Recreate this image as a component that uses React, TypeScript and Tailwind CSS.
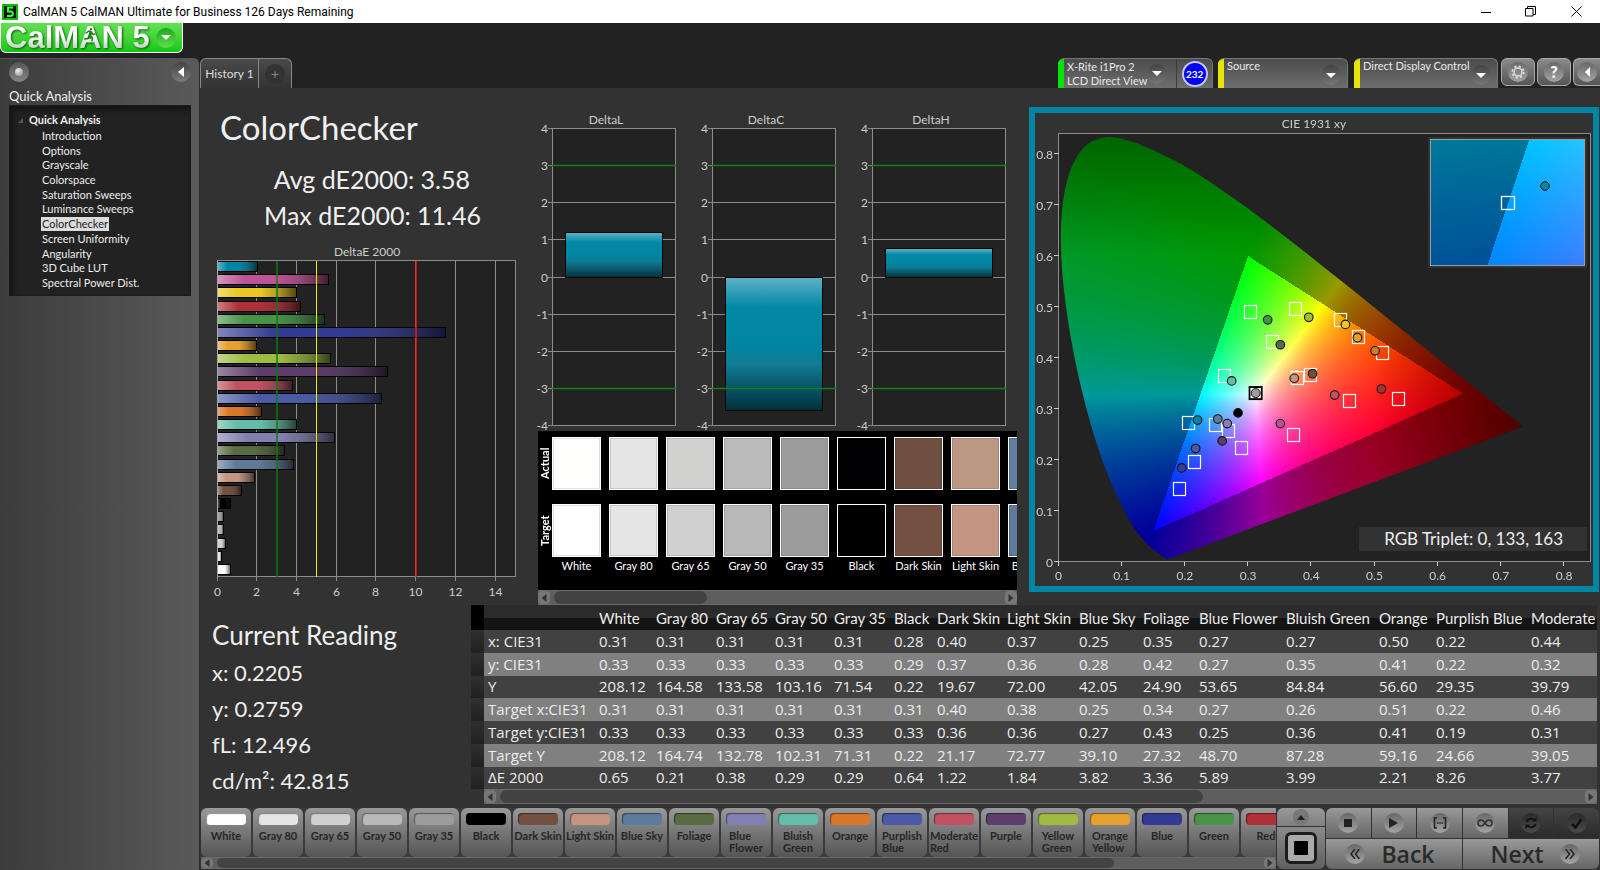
import React, { useEffect, useRef } from "react";

type Patch = { name: string; color: string; actual?: string; dE: number };

const patches: Patch[] = [
  { name: "White", color: "#ffffff", actual: "#fffffd", dE: 0.65 },
  { name: "Gray 80", color: "#e5e5e5", dE: 0.21 },
  { name: "Gray 65", color: "#d0d0d0", actual: "#d2d2d0", dE: 0.38 },
  { name: "Gray 50", color: "#b9b9b9", actual: "#bababa", dE: 0.29 },
  { name: "Gray 35", color: "#9c9c9c", dE: 0.29 },
  { name: "Black", color: "#000000", actual: "#020204", dE: 0.64 },
  { name: "Dark Skin", color: "#735041", actual: "#6f4f40", dE: 1.22 },
  { name: "Light Skin", color: "#c39582", actual: "#bc9784", dE: 1.84 },
  { name: "Blue Sky", color: "#5e7a9c", actual: "#5f7fa0", dE: 3.82 },
  { name: "Foliage", color: "#596b42", dE: 3.36 },
  { name: "Blue Flower", color: "#8280b0", dE: 5.89 },
  { name: "Bluish Green", color: "#64bda9", dE: 3.99 },
  { name: "Orange", color: "#d87828", dE: 2.21 },
  { name: "Purplish Blue", color: "#4a5aa5", dE: 8.26 },
  { name: "Moderate Red", color: "#c25261", dE: 3.77 },
  { name: "Purple", color: "#5d3d6b", dE: 8.58 },
  { name: "Yellow Green", color: "#9fbc40", dE: 5.7 },
  { name: "Orange Yellow", color: "#e6a02e", dE: 1.98 },
  { name: "Blue", color: "#333c94", dE: 11.46 },
  { name: "Green", color: "#479447", dE: 5.4 },
  { name: "Red", color: "#b03039", dE: 4.2 },
  { name: "Yellow", color: "#ecc821", dE: 4.0 },
  { name: "Magenta", color: "#bb5394", dE: 5.6 },
  { name: "Cyan", color: "#0085a3", dE: 2.03 },
];

/* ---------- shared pieces ---------- */

function ScrollBar({ thumb, small = false }: { thumb: string; small?: boolean }) {
  const arrow = "flex w-3 shrink-0 items-center justify-center rounded-sm bg-[#777] text-[#333]";
  return (
    <div className={`flex gap-1 border-y border-[#6a6a6a] bg-[#5e5e5e] ${small ? "h-3" : "h-[15px]"}`}>
      <button aria-label="Scroll left" className={arrow}>
        <svg width="6" height="8" viewBox="0 0 6 8"><path d="M5.5 0v8L.5 4z" fill="currentColor" /></svg>
      </button>
      <div className="flex-1"><div className={`h-full rounded-full bg-[#434343] ${thumb}`} /></div>
      <button aria-label="Scroll right" className={arrow}>
        <svg width="6" height="8" viewBox="0 0 6 8"><path d="M.5 0v8l5-4z" fill="currentColor" /></svg>
      </button>
    </div>
  );
}

function Knob({ children, dark = false }: { children: React.ReactNode; dark?: boolean }) {
  return (
    <span className={`flex size-5 items-center justify-center rounded-full bg-linear-to-b ${dark ? "from-[#2b2b2b] to-[#4a4a4a]" : "from-[#686868] to-[#a5a5a5]"}`}>
      {children}
    </span>
  );
}

function Caret() {
  return (
    <span className="flex size-5 items-center justify-center rounded-full bg-linear-to-b from-[#444] to-[#777]">
      <svg width="10" height="5" viewBox="0 0 10 5"><path d="M0 0h10L5 5z" fill="#fff" /></svg>
    </span>
  );
}

/* ---------- window chrome ---------- */

function TitleBar() {
  return (
    <div className="flex h-[23px] items-center bg-white text-black">
      <svg className="ml-0.5" width="16" height="16" viewBox="0 0 16 16">
        <rect width="16" height="16" fill="#031c03" />
        <rect x="1" y="1" width="14" height="14" fill="none" stroke="#12b812" strokeWidth="2" />
        <path d="M11 3.500H6v4h2.500c3 0 3 4.500 0 4.500H5" fill="none" stroke="#3dfc3d" strokeWidth="2" />
      </svg>
      <h1 className="ml-[5px] flex-1 font-['Roboto',sans-serif] text-[12px]">CalMAN 5 CalMAN Ultimate for Business 126 Days Remaining</h1>
      <button aria-label="Minimize" className="flex w-11 justify-center"><svg width="10" height="10" viewBox="0 0 10 10"><path d="M0 5.500h10" stroke="#000" /></svg></button>
      <button aria-label="Restore" className="flex w-11 justify-center">
        <svg width="11" height="11" viewBox="0 0 11 11" fill="none" stroke="#000"><path d="M.5 2.500h7.500v7.500H.5zM2.500 2.500V.5h8v8H8" /></svg>
      </button>
      <button aria-label="Close" className="flex w-12 justify-center"><svg width="11" height="11" viewBox="0 0 11 11"><path d="M.5.5l10 10M10.500.5l-10 10" stroke="#000" /></svg></button>
    </div>
  );
}

function Logo() {
  return (
    <button className="relative flex h-[30px] w-[183px] items-center justify-between overflow-hidden rounded-b-md border border-t-0 border-white bg-linear-to-b from-[#62e052] to-[#06c80e] pr-1.5 pl-1">
      <span className="bg-linear-to-b from-white from-40% to-[#b8c4b8] bg-clip-text font-['Liberation_Sans',sans-serif] text-[31px] leading-[28px] font-bold text-transparent drop-shadow-[1px_1px_1px_rgba(0,60,0,0.8)]">CalMAN 5</span>
      <svg className="absolute top-1 left-[82px]" width="14" height="16" viewBox="0 0 14 16" fill="none" stroke="#1c7a1c" strokeWidth="1.400" strokeLinecap="round">
        <circle cx="8" cy="2.200" r="1.100" fill="#1c7a1c" stroke="none" />
        <path d="M3 6l3-2 2.500 1L7 9l2.500 2-.5 3M7 9l-2 2.500-3.500.5M8.500 5L10 7.500l2-.5" />
      </svg>
      <span className="flex size-5 items-center justify-center rounded-full bg-linear-to-b from-[#18a818] to-[#5ce04c]">
        <svg width="10" height="5" viewBox="0 0 10 5"><path d="M0 0h10L5 5z" fill="#fff" /></svg>
      </span>
    </button>
  );
}

const steps = ["Introduction", "Options", "Grayscale", "Colorspace", "Saturation Sweeps", "Luminance Sweeps", "ColorChecker", "Screen Uniformity", "Angularity", "3D Cube LUT", "Spectral Power Dist."];

function Sidebar() {
  return (
    <aside className="w-[200px] shrink-0 rounded-tr-md border-t border-r border-t-[#555] border-r-[#2a2a2a] bg-linear-to-r from-[#3c3c3c] to-[#5a5a5a] pr-2 pl-[9px]">
      <div className="flex items-center justify-between pt-[3px]">
        <button aria-label="Record" className="flex size-5 items-center justify-center rounded-full bg-linear-to-b from-[#555] to-[#868686]">
          <span className="size-2 rounded-full bg-radial-[at_35%_30%] from-[#eee] to-[#888]" />
        </button>
        <button aria-label="Collapse panel" className="flex size-5 items-center justify-center rounded-full bg-linear-to-b from-[#444] to-[#7c7c7c]">
          <svg width="6" height="10" viewBox="0 0 6 10"><path d="M6 0v10L0 5z" fill="#fff" /></svg>
        </button>
      </div>
      <h2 className="mt-[6px] text-[13px] leading-[17px] text-[#eee]">Quick Analysis</h2>
      <nav className="flex h-[191px] flex-col border border-[#1b1b1b] bg-[#222] pt-1.5 shadow-[inset_3px_4px_5px_#141414]">
        <div className="flex items-center gap-1.5 pl-2 text-[11px] leading-4 font-bold text-[#eee]">
          <svg width="5" height="5" viewBox="0 0 5 5"><path d="M5 0v5H0z" fill="#555" /></svg>
          Quick Analysis
        </div>
        <ul className="grid h-[162px] content-between pt-px pl-[31px] text-[11px] leading-[14px] text-[#ededed]">
          {steps.map((s) => (
            <li key={s} className="flex">
              <a href="#" className={s === "ColorChecker" ? "bg-[#dcdcdc] px-px text-[#222]" : "px-px"}>{s}</a>
            </li>
          ))}
        </ul>
      </nav>
    </aside>
  );
}

function DeviceTabs() {
  const tab = "flex h-full shrink-0 rounded-t-md border-t border-r border-[#777] bg-linear-to-b from-[#4c4c4c] to-[#6e6e6e] text-left text-[11px] leading-[14px] text-[#e8e8e8] overflow-hidden";
  const tool = "flex h-7 shrink-0 items-center justify-center border border-[#aaa] bg-linear-to-b from-[#8a8a8a] to-[#555]";
  return (
    <div className="flex h-[30px]">
      <div className={`${tab} w-[155px]`}>
        <button className="flex flex-1 items-center border-l-[6px] border-[#07e407] pl-[3px] text-left">
          <span className="flex-1 whitespace-nowrap">X-Rite i1Pro 2<br />LCD Direct View</span>
          <span className="mr-[9px]"><Caret /></span>
        </button>
        <div className="flex w-9 items-center justify-center border-l border-[#3a3a3a]">
          <span className="flex size-[26px] items-center justify-center rounded-full border-2 border-[#c6c6f4] bg-[#0000ff] text-[10px] font-bold text-white">232</span>
        </div>
      </div>
      <button className={`${tab} ml-[5px] w-[130px]`}>
        <span className="flex h-full flex-1 items-start border-l-[6px] border-[#e9e500] pl-[3px]">Source</span>
        <span className="mt-1.5 mr-1.5"><Caret /></span>
      </button>
      <button className={`${tab} ml-1.5 w-[144px]`}>
        <span className="flex h-full flex-1 items-start border-l-[6px] border-[#e9e500] pl-[3px] whitespace-nowrap">Direct Display Control</span>
        <span className="mt-1.5 mr-1.5"><Caret /></span>
      </button>
      <button aria-label="Settings" className={`${tool} ml-[3px] w-[34px] rounded-md`}>
        <Knob>
          <svg width="14" height="14" viewBox="0 0 14 14" fill="none" stroke="#ddd">
            <circle cx="7" cy="7" r="4" strokeWidth="1.500" />
            <circle cx="7" cy="7" r="5.700" strokeWidth="1.800" strokeDasharray="2.240 2.240" />
          </svg>
        </Knob>
      </button>
      <button aria-label="Help" className={`${tool} ml-0.5 w-[34px] rounded-md text-base font-black text-white`}><Knob>?</Knob></button>
      <button aria-label="Collapse" className={`${tool} ml-0.5 w-[27px] rounded-l-md border-r-0`}>
        <Knob><svg width="5" height="10" viewBox="0 0 5 10"><path d="M5 0v10L0 5z" fill="#fff" /></svg></Knob>
      </button>
    </div>
  );
}

/* ---------- charts ---------- */

const label = "fill-[#cdcdcd] font-['Lato',sans-serif] text-[12px]";

function DeltaEChart() {
  const unit = 19.87;
  const bars = [...patches].reverse();
  return (
    <svg viewBox="0 0 326 364" className="block w-full" role="img" aria-label="DeltaE 2000">
      <defs>
        <linearGradient id="sheen"><stop offset="0" stopColor="#fff" stopOpacity=".38" /><stop offset=".25" stopColor="#fff" stopOpacity="0" /><stop offset=".55" stopColor="#222" stopOpacity="0" /><stop offset=".72" stopColor="#333" stopOpacity=".25" /><stop offset="1" stopColor="#000" stopOpacity=".65" /></linearGradient>
      </defs>
      <text x="167" y="16" textAnchor="middle" className={label}>DeltaE 2000</text>
      <rect x="17.500" y="20.500" width="298" height="316" fill="#222" stroke="#8c8c8c" />
      {[0, 2, 4, 6, 8, 10, 12, 14].map((v) => {
        const x = Math.floor(17 + v * unit) + 0.5;
        return (
          <g key={v}>
            <path d={`M${x} 21V341`} stroke="#8c8c8c" />
            <text x={x} y="356" textAnchor="middle" className={label}>{v}</text>
          </g>
        );
      })}
      {bars.map((b, i) => {
        const y = 21.5 + Math.round(i * 13.17);
        const w = Math.round(b.dE * unit);
        return (
          <g key={b.name}>
            <rect x="17.500" y={y} width={w} height="10" fill={b.color} />
            <rect x="17.500" y={y} width={w} height="10" fill="url(#sheen)" stroke="#000" />
          </g>
        );
      })}
      <path d="M17.500 21V337" stroke="#aaa" />
      <path d="M77 21V337" stroke="#0d7a12" strokeWidth="1.500" />
      <path d="M116.500 21V337" stroke="#f0ea00" />
      <path d="M216 21V337" stroke="#ff1010" strokeWidth="1.500" />
    </svg>
  );
}

function DeltaChart({ title, value, width }: { title: string; value: number; width: number }) {
  const right = width - 10;
  const at = (v: number) => Math.floor(166 - v * 37.1) + 0.5;
  const top = at(Math.max(value, 0));
  const bottom = at(Math.min(value, 0));
  return (
    <svg viewBox={`0 0 ${width} 320`} className="block w-full" role="img" aria-label={title}>
      <defs>
        <linearGradient id={`fill-${title}`} x2="0" y2="1"><stop offset="0" stopColor="#5db3c8" /><stop offset=".22" stopColor="#0388a6" /><stop offset=".5" stopColor="#0085a3" /><stop offset=".65" stopColor="#107b93" /><stop offset="1" stopColor="#00303b" /></linearGradient>
      </defs>
      <text x={width / 2} y="13" textAnchor="middle" className={label}>{title}</text>
      <rect x="26.500" y="17.500" width={right - 27} height="297" fill="#222" stroke="#8c8c8c" />
      {[4, 3, 2, 1, 0, -1, -2, -3, -4].map((v) => (
        <g key={v}>
          <path d={`M22 ${at(v)}H${right}`} stroke="#8c8c8c" />
          <text x="22" y={at(v) + 4} textAnchor="end" className={label}>{v}</text>
        </g>
      ))}
      <rect x="39.500" y={top} width={right - 53} height={bottom - top} fill={`url(#fill-${title})`} stroke="#000" />
      <path d={`M26 ${at(3)}H${right}M26 ${at(-3)}H${right}`} stroke="#128016" strokeWidth="1.500" />
    </svg>
  );
}

const locus: [number, number][] = [
  [0.1741, 0.005], [0.1714, 0.0051], [0.1644, 0.0109], [0.1566, 0.0177], [0.144, 0.0297], [0.1241, 0.0578], [0.1096, 0.0868], [0.0913, 0.1327],
  [0.0687, 0.2007], [0.0454, 0.295], [0.0235, 0.4127], [0.0082, 0.5384], [0.0039, 0.6548], [0.0139, 0.7502], [0.0389, 0.812], [0.0743, 0.8338],
  [0.1142, 0.8262], [0.1547, 0.8059], [0.1929, 0.7816], [0.2296, 0.7543], [0.3016, 0.6923], [0.3731, 0.6245], [0.4441, 0.5547], [0.5125, 0.4866],
  [0.5752, 0.4242], [0.627, 0.3725], [0.6658, 0.334], [0.6915, 0.3083], [0.719, 0.2809], [0.7347, 0.2653],
];

const clamp = (v: number) => Math.min(1, Math.max(0, v));

/* Brightest displayable colour of a chromaticity; dimmed where it is out of gamut. */
function chromaColor(x: number, y: number): [number, number, number] {
  const yy = Math.max(y, 0.001);
  const X = x / yy;
  const Z = (1 - x - yy) / yy;
  const rgb = [3.2406 * X - 1.5372 - 0.4986 * Z, -0.9689 * X + 1.8758 + 0.0415 * Z, 0.0557 * X - 0.204 + 1.057 * Z];
  const inside = Math.min(...rgb) >= 0;
  const peak = Math.max(...rgb);
  const fade = (1 - clamp((x - 0.5) / 0.24) * 0.5) * (1 - clamp((y - 0.6) / 0.24) * 0.35);
  const gain = (inside ? 255 : 153) * fade;
  return [clamp(rgb[0] / peak) * gain, clamp(rgb[1] / peak) * gain, clamp(rgb[2] / peak) * gain];
}

function ChromaField({ x0, y0, x1, y1, width, height, clipLocus, className }: { x0: number; y0: number; x1: number; y1: number; width: number; height: number; clipLocus?: boolean; className: string }) {
  const ref = useRef<HTMLCanvasElement>(null);
  useEffect(() => {
    const ctx = ref.current?.getContext("2d");
    if (!ctx) return;
    const buffer = document.createElement("canvas");
    buffer.width = width;
    buffer.height = height;
    const bctx = buffer.getContext("2d")!;
    const img = bctx.createImageData(width, height);
    for (let j = 0; j < height; j++) {
      for (let i = 0; i < width; i++) {
        const c = chromaColor(x0 + ((i + 0.5) / width) * (x1 - x0), y1 - ((j + 0.5) / height) * (y1 - y0));
        const o = (j * width + i) * 4;
        img.data[o] = c[0];
        img.data[o + 1] = c[1];
        img.data[o + 2] = c[2];
        img.data[o + 3] = 255;
      }
    }
    bctx.putImageData(img, 0, 0);
    ctx.clearRect(0, 0, width, height);
    ctx.save();
    if (clipLocus) {
      const pts = locus.map(([x, y]) => [((x - x0) / (x1 - x0)) * width, ((y1 - y) / (y1 - y0)) * height]);
      ctx.beginPath();
      ctx.moveTo(pts[0][0], pts[0][1]);
      for (let k = 0; k < pts.length - 1; k++) {
        const p0 = pts[Math.max(k - 1, 0)], p1 = pts[k], p2 = pts[k + 1], p3 = pts[Math.min(k + 2, pts.length - 1)];
        ctx.bezierCurveTo(p1[0] + (p2[0] - p0[0]) / 6, p1[1] + (p2[1] - p0[1]) / 6, p2[0] - (p3[0] - p1[0]) / 6, p2[1] - (p3[1] - p1[1]) / 6, p2[0], p2[1]);
      }
      ctx.closePath();
      ctx.clip();
    }
    ctx.drawImage(buffer, 0, 0);
    ctx.restore();
  }, [x0, y0, x1, y1, width, height, clipLocus]);
  return <canvas ref={ref} width={width} height={height} className={className} />;
}

const targets: [number, number][] = [
  [0.305, 0.491], [0.376, 0.497], [0.447, 0.475], [0.475, 0.442], [0.513, 0.41], [0.339, 0.431], [0.263, 0.365], [0.379, 0.36], [0.4, 0.367],
  [0.462, 0.315], [0.538, 0.32], [0.373, 0.249], [0.207, 0.273], [0.249, 0.268], [0.269, 0.257], [0.29, 0.223], [0.216, 0.195], [0.193, 0.143],
];
const readings: [number, number, string][] = [
  [0.331, 0.475, "#45924a"], [0.396, 0.48, "#9ebc40"], [0.454, 0.466, "#e8c820"], [0.473, 0.44, "#e6a030"], [0.501, 0.414, "#d87828"],
  [0.351, 0.426, "#5a6b40"], [0.274, 0.355, "#64bcaa"], [0.373, 0.36, "#c49682"], [0.402, 0.369, "#755040"], [0.437, 0.327, "#c35060"],
  [0.511, 0.339, "#af2f38"], [0.351, 0.271, "#ba5192"], [0.284, 0.292, "#000000"], [0.252, 0.28, "#5f7ca0"], [0.267, 0.271, "#8480b0"],
  [0.259, 0.237, "#5c3d69"], [0.22, 0.278, "#0085a3"], [0.217, 0.222, "#4759a4"], [0.195, 0.184, "#353c92"],
];

function CieChart() {
  const px = (x: number) => 23.5 + x * 632;
  const py = (y: number) => 448.5 - y * 508.8;
  const tenths = [0, 1, 2, 3, 4, 5, 6, 7, 8];
  return (
    <section className="flex-1 border-[6px] border-[#0085a3] bg-[#323232]">
      <div className="grid">
        <ChromaField x0={-0.037184} y0={-0.048152} x1={0.845728} y1={0.881486} width={558} height={473} clipLocus className="z-10 col-start-1 row-start-1 block w-full" />
        <svg viewBox="0 0 558 473" className="col-start-1 row-start-1 block w-full">
          <rect x="23.500" y="20.500" width="532" height="428" fill="#222" stroke="#8c8c8c" />
        </svg>
        <svg viewBox="0 0 558 473" className="z-20 col-start-1 row-start-1 block w-full" role="img" aria-label="CIE 1931 xy">
          <text x="279" y="15" textAnchor="middle" className={label}>CIE 1931 xy</text>
          {tenths.map((t) => (
            <g key={t}>
              <path d={`M${Math.round(px(t / 10)) - 0.5} 449v4M19 ${Math.round(py(t / 10)) - 0.5}h5`} stroke="#ccc" />
              <text x={px(t / 10)} y="467" textAnchor="middle" className={label}>{t / 10}</text>
              <text x="18" y={py(t / 10) + 5} textAnchor="end" className={label}>{t / 10}</text>
            </g>
          ))}
          {targets.map(([x, y]) => (
            <rect key={`${x}${y}`} x={Math.round(px(x)) - 6.5} y={Math.round(py(y)) - 6.5} width="12" height="13" fill="none" stroke="#fff" strokeWidth="1.200" />
          ))}
          {readings.map(([x, y, c]) => (
            <circle key={c} cx={px(x)} cy={py(y)} r="4.300" fill={c} stroke="#111" strokeWidth="1.100" />
          ))}
          <rect x={px(0.3127) - 6.5} y={py(0.331) - 6} width="12" height="12" fill="none" stroke="#000" strokeWidth="2" />
          <rect x={px(0.3127) - 5} y={py(0.331) - 4.5} width="9" height="9" fill="none" stroke="#fff" />
          <circle cx={px(0.312)} cy={py(0.331)} r="4.500" fill="#9c9c9c" stroke="#111" />
        </svg>
        <div className="z-30 col-start-1 row-start-1 flex flex-col items-end justify-between pt-6 pr-1.5 pb-[35px]">
          <div className="border-2 border-[#323232]">
            <div className="grid border border-[#9a9a9a]">
              <ChromaField x0={0.1827} y0={0.2452} x1={0.2333} y1={0.2944} width={153} height={125} className="col-start-1 row-start-1 block" />
              <svg width="153" height="125" viewBox="0 0 153 125" className="col-start-1 row-start-1">
                <rect x="70.500" y="56.500" width="13" height="13" fill="none" stroke="#fff" strokeWidth="1.300" />
                <circle cx="114" cy="46" r="4.300" fill="#0085a3" stroke="#111" />
              </svg>
            </div>
          </div>
          <p className="w-[228px] bg-[#323232] pr-6 text-right text-[17px] leading-6 text-[#eee]">RGB Triplet: 0, 133, 163</p>
        </div>
      </div>
    </section>
  );
}

/* ---------- swatches and table ---------- */

function SwatchPanel() {
  return (
    <div className="ml-3 w-[479px]">
      <div className="flex h-[159px] overflow-hidden bg-black pt-1.5 text-[11px] text-white">
        <div className="flex w-3.5 shrink-0 flex-col gap-3.5 font-bold">
          {["Actual", "Target"].map((t) => (
            <span key={t} className="flex h-[53px] w-3.5 rotate-180 items-center justify-center leading-[14px] [writing-mode:vertical-rl]">{t}</span>
          ))}
        </div>
        <div className="flex gap-2">
          {patches.slice(0, 9).map((p) => (
            <div key={p.name} className="flex w-[49px] shrink-0 flex-col">
              <div className="h-[53px] border border-white shadow-[inset_0_0_0_1px_rgba(0,0,0,0.12)]" style={{ backgroundColor: p.actual ?? p.color }} />
              <div className="mt-3.5 h-[53px] border border-white shadow-[inset_0_0_0_1px_rgba(0,0,0,0.12)]" style={{ backgroundColor: p.color }} />
              <span className="mt-px text-center leading-[15px] whitespace-nowrap">{p.name}</span>
            </div>
          ))}
        </div>
      </div>
      <ScrollBar thumb="w-[153px]" />
    </div>
  );
}

const rows: [string, string[]][] = [
  ["x: CIE31", ["0.31", "0.31", "0.31", "0.31", "0.31", "0.28", "0.40", "0.37", "0.25", "0.35", "0.27", "0.27", "0.50", "0.22", "0.44"]],
  ["y: CIE31", ["0.33", "0.33", "0.33", "0.33", "0.33", "0.29", "0.37", "0.36", "0.28", "0.42", "0.27", "0.35", "0.41", "0.22", "0.32"]],
  ["Y", ["208.12", "164.58", "133.58", "103.16", "71.54", "0.22", "19.67", "72.00", "42.05", "24.90", "53.65", "84.84", "56.60", "29.35", "39.79"]],
  ["Target x:CIE31", ["0.31", "0.31", "0.31", "0.31", "0.31", "0.31", "0.40", "0.38", "0.25", "0.34", "0.27", "0.26", "0.51", "0.22", "0.46"]],
  ["Target y:CIE31", ["0.33", "0.33", "0.33", "0.33", "0.33", "0.33", "0.36", "0.36", "0.27", "0.43", "0.25", "0.36", "0.41", "0.19", "0.31"]],
  ["Target Y", ["208.12", "164.74", "132.78", "102.31", "71.31", "0.22", "21.17", "72.77", "39.10", "27.32", "48.70", "87.28", "59.16", "24.66", "39.05"]],
  ["ΔE 2000", ["0.65", "0.21", "0.38", "0.29", "0.29", "0.64", "1.22", "1.84", "3.82", "3.36", "5.89", "3.99", "2.21", "8.26", "3.77"]],
];
const rowStyles = ["h-[23px] bg-[#414141]", "h-[23px] bg-[#808080]", "h-[22px] bg-[#414141]", "h-[23px] bg-[#808080]", "h-[23px] bg-[#414141]", "h-[23px] bg-[#808080]", "h-[22px] bg-[#414141]"];
const colWidths = ["w-[57px]", "w-[60px]", "w-[59px]", "w-[59px]", "w-[60px]", "w-[43px]", "w-[70px]", "w-[72px]", "w-[64px]", "w-[56px]", "w-[87px]", "w-[93px]", "w-[57px]", "w-[95px]", "w-auto"];

function ReadingsTable() {
  return (
    <div className="min-w-0 flex-1 pr-[3px]">
      <table className="w-full table-fixed border-collapse text-left whitespace-nowrap text-[#ececec]">
        <colgroup>
          <col className="w-[13px]" />
          <col className="w-[115px]" />
          {colWidths.map((w, i) => <col key={i} className={w} />)}
        </colgroup>
        <thead>
          <tr className="h-[25px] bg-linear-to-b from-[#2b2b2b] from-50% to-[#141414] to-52% text-[15px] leading-5">
            <td className="bg-black" />
            <td />
            {patches.slice(0, 15).map((p) => (
              <th key={p.name} scope="col" className="overflow-hidden p-0 font-normal">{p.name === "Moderate Red" ? "Moderate" : p.name}</th>
            ))}
          </tr>
        </thead>
        <tbody className="font-['Open_Sans',sans-serif] text-[15px] leading-5">
          {rows.map(([name, cells], r) => (
            <tr key={name} className={rowStyles[r]}>
              <td className="bg-linear-to-b from-[#303030] to-[#202020] p-0" />
              <th scope="row" className="p-0 pb-0.5 pl-1 font-normal">{name}</th>
              {cells.map((c, i) => <td key={i} className="p-0 pb-0.5">{c}</td>)}
            </tr>
          ))}
        </tbody>
      </table>
      <div className="ml-[13px]"><ScrollBar thumb="w-[65%]" /></div>
    </div>
  );
}

/* ---------- bottom strip ---------- */

function PatchStrip() {
  return (
    <div className="min-w-0 flex-1">
      <div className="flex h-[49px] gap-0.5 overflow-hidden bg-[#3a3a3a]">
        {patches.slice(0, 21).map((p) => (
          <button key={p.name} className="flex h-[49px] w-[50px] shrink-0 flex-col items-center overflow-hidden rounded-md bg-linear-to-b from-[#999] to-[#555] pt-[5px] text-[11px] leading-3 font-bold text-[#262626]">
            <span className="mb-[5px] h-3 w-10 rounded-sm shadow-[inset_1px_1px_1px_rgba(0,0,0,0.45)]" style={{ backgroundColor: p.color }} />
            <span className="text-left">
              {["Dark Skin", "Light Skin", "Blue Sky"].includes(p.name) || p.name.startsWith("Gray") ? <span className="whitespace-nowrap">{p.name}</span> : p.name.split(" ").map((w) => <span key={w} className="block">{w}</span>)}
            </span>
          </button>
        ))}
      </div>
      <ScrollBar small thumb="w-[86%]" />
    </div>
  );
}

function Transport() {
  const cell = "flex h-[30px] items-center justify-center bg-linear-to-b from-[#999] to-[#666] text-[#2a2a2a]";
  const off = "flex h-[30px] items-center justify-center bg-linear-to-b from-[#444] to-[#2a2a2a] text-[#181818]";
  return (
    <div className="flex w-[323px] shrink-0 gap-px pr-px">
      <div className="flex w-12 flex-col gap-px">
        <button aria-label="Expand" className="flex h-[18px] items-center justify-center rounded-t-md bg-linear-to-b from-[#999] to-[#808080]">
          <span className="flex size-4 items-center justify-center rounded-full bg-[#777]"><svg width="8" height="5" viewBox="0 0 8 5"><path d="M0 5h8L4 0z" fill="#222" /></svg></span>
        </button>
        <button aria-label="Show pattern" className="flex h-[42px] items-center justify-center rounded-b-md bg-linear-to-b from-[#8a8a8a] to-[#606060]">
          <span className="flex size-8 items-center justify-center rounded-md border-[3px] border-[#1c1c1c] bg-[#aaa]"><span className="size-3.5 bg-black" /></span>
        </button>
      </div>
      <div className="flex-1">
        <div className="grid grid-cols-6 gap-px">
          <button aria-label="Stop" className={`${cell} rounded-tl-md`}><Knob><span className="size-2 bg-[#222]" /></Knob></button>
          <button aria-label="Play" className={cell}><Knob><svg width="9" height="10" viewBox="0 0 9 10"><path d="M0 0l9 5-9 5z" fill="#222" /></svg></Knob></button>
          <button aria-label="Read series" className={cell}><Knob><svg width="14" height="12" viewBox="0 0 14 12" fill="none" stroke="#222" strokeWidth="1.600"><path d="M4 1H1.500v10H4M10 1h2.500v10H10M4 6h1.500M6.300 6h1.500M8.600 6h1.500" /></svg></Knob></button>
          <button aria-label="Read continuously" className={cell}><Knob><svg width="16" height="8" viewBox="0 0 16 8" fill="none" stroke="#333" strokeWidth="1.600"><path d="M8 4C6.500 1.500 5.300 1 4 1a3 3 0 000 6c1.300 0 2.500-.5 4-3s2.700-3 4-3a3 3 0 010 6c-1.300 0-2.500-.5-4-3z" /></svg></Knob></button>
          <button aria-label="Refresh" className={off}><Knob dark><svg width="12" height="12" viewBox="0 0 12 12" fill="none" stroke="#141414" strokeWidth="2"><path d="M1.500 5A4.500 4 0 019 3M10.500 7A4.500 4 0 013 9" /><path d="M7 4.500h4.500V0zM5 7.500H.5V12z" fill="#141414" stroke="none" /></svg></Knob></button>
          <button aria-label="Accept" className={`${off} rounded-tr-md`}><Knob dark><svg width="12" height="11" viewBox="0 0 12 11" fill="none" stroke="#111" strokeWidth="2.600"><path d="M1 6l3.500 3.500L10.500 1" /></svg></Knob></button>
        </div>
        <div className="mt-px grid grid-cols-2 gap-px font-['Open_Sans',sans-serif] text-[23px] font-semibold">
          <button className={`${cell} gap-4 rounded-bl-md pr-2`}><Knob><svg width="10" height="10" viewBox="0 0 10 10" fill="none" stroke="#222" strokeWidth="1.500"><path d="M5 0L1 5l4 5M9.500 0l-4 5 4 5" /></svg></Knob>Back</button>
          <button className={`${cell} gap-4 rounded-br-md pl-2`}>Next<Knob><svg width="10" height="10" viewBox="0 0 10 10" fill="none" stroke="#222" strokeWidth="1.500"><path d="M.5 0l4 5-4 5M5 0l4 5-4 5" /></svg></Knob></button>
        </div>
      </div>
    </div>
  );
}

export default function App() {
  return (
    <div className="flex min-h-screen flex-col overflow-hidden bg-[#222] font-['Lato',sans-serif]">
      <TitleBar />
      <div className="h-[35px]"><Logo /></div>
      <div className="flex flex-1">
        <Sidebar />
        <div className="flex min-w-0 flex-1 flex-col">
          <div className="flex h-[30px] justify-between">
            <div className="flex rounded-t-md border border-b-0 border-[#888] bg-linear-to-b from-[#4a4a4a] to-[#333]">
              <button className="w-[58px] border-r border-[#888] text-xs text-[#ddd]">History 1</button>
              <button aria-label="Add history" className="flex w-8 items-center justify-center"><span className="flex size-5 items-center justify-center rounded-full bg-[#333] text-sm text-[#888]">+</span></button>
            </div>
            <DeviceTabs />
          </div>
          <main className="flex flex-1 flex-col bg-[#323232]">
            <div className="flex pr-px">
              <section className="w-[326px] shrink-0 text-[#f0f0f0]">
                <h2 className="pt-[19px] pl-5 text-[33px] leading-10">ColorChecker</h2>
                <div className="mt-3.5 pr-5 text-right text-[25px] leading-9">
                  <p className="pr-[36px]">Avg dE2000: 3.58</p>
                  <p className="pr-[25px]">Max dE2000: 11.46</p>
                </div>
                <div className="mt-[7px]"><DeltaEChart /></div>
              </section>
              <section className="flex w-[490px] shrink-0 flex-col pt-[23px]">
                <div className="flex">
                  <div className="w-40"><DeltaChart title="DeltaL" value={1.2} width={160} /></div>
                  <div className="w-40"><DeltaChart title="DeltaC" value={-3.6} width={160} /></div>
                  <div className="w-[170px]"><DeltaChart title="DeltaH" value={0.78} width={170} /></div>
                </div>
                <SwatchPanel />
              </section>
              <div className="flex min-w-0 flex-1 items-start pt-[19px] pl-[13px]"><CieChart /></div>
            </div>
            <div className="flex">
              <section className="w-[271px] shrink-0 pt-3 pl-3 text-[22px] leading-9 text-[#eee]">
                <h2 className="mb-0.5 text-[26px]">Current Reading</h2>
                <p>x: 0.2205</p>
                <p>y: 0.2759</p>
                <p>fL: 12.496</p>
                <p>cd/m²: 42.815</p>
              </section>
              <ReadingsTable />
            </div>
            <div className="mt-1 flex gap-px pl-px">
              <PatchStrip />
              <Transport />
            </div>
          </main>
        </div>
      </div>
    </div>
  );
}
